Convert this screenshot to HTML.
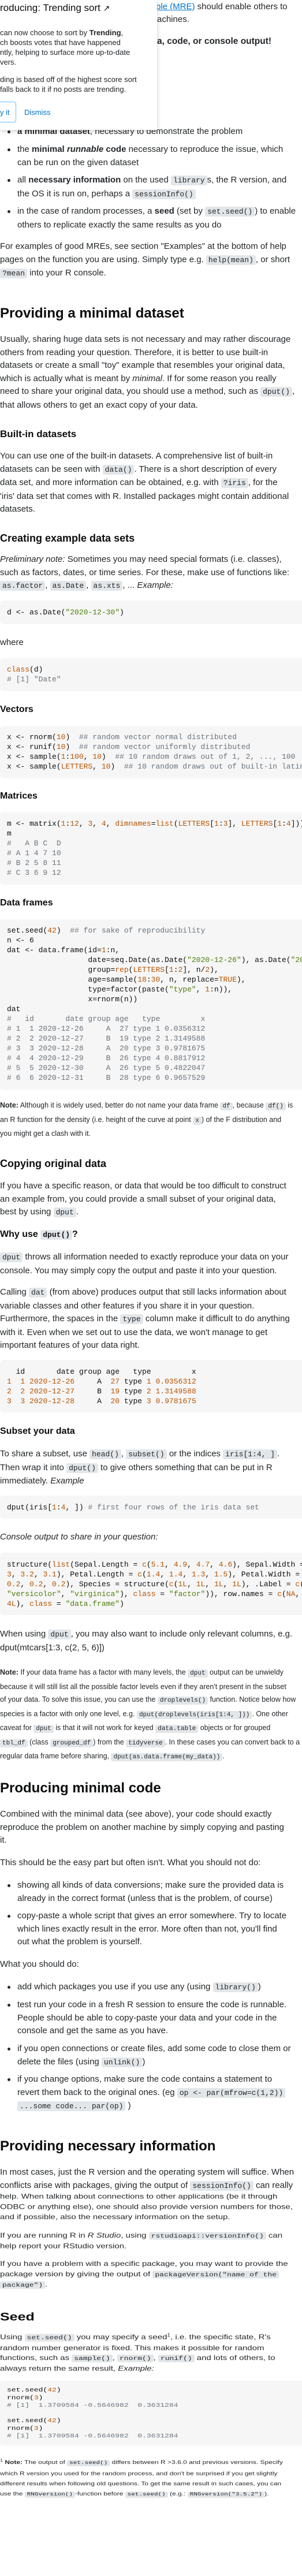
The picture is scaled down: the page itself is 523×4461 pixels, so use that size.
<!DOCTYPE html>
<html><head><meta charset="utf-8">
<style>
html,body{margin:0;padding:0;background:#fff}
html{overflow:hidden}
body{width:523px;height:4461px;position:relative;overflow:hidden;overflow-x:hidden;font-family:"Liberation Sans",sans-serif;color:#232629}
.p{position:absolute;left:0;white-space:nowrap;font-size:15px;line-height:22.5px}
.li{position:absolute;left:30px;white-space:nowrap;font-size:15px;line-height:22.5px}
.li:before{content:"";position:absolute;left:-17px;top:9px;width:5px;height:5px;border-radius:50%;background:#232629}
.n{font-size:12.5px}
.n code{font-size:11px}
code{font-family:"Liberation Mono",monospace;font-size:13px;background:#e3e6e8;border-radius:3px;padding:1px 4px}
.h1{position:absolute;left:0;font-size:24px;font-weight:bold;line-height:30px;white-space:nowrap;color:#0c0d0e}
.h2{position:absolute;left:0;font-size:18px;font-weight:bold;line-height:24px;white-space:nowrap;color:#0c0d0e}
.h3{position:absolute;left:0;font-size:16px;font-weight:bold;line-height:24px;white-space:nowrap;color:#0c0d0e}
.h3 code{font-size:13px}
.cb{position:absolute;left:0;width:523px;overflow:hidden;background:#f6f6f6;border-radius:6px 0 0 6px}
.cb pre{margin:0;padding-left:12px;font-family:"Liberation Mono",monospace;font-size:13px;line-height:17px;color:#0c0d0e}
.o{color:#b75301}.g{color:#4e7d0b}.c{color:#6a737c}
.pop{position:absolute;left:0;top:0;width:272px;height:225px;background:#fff;box-shadow:0 2px 8px rgba(0,0,0,.18),0 0 1px rgba(0,0,0,.15);overflow:hidden}
.pop div{position:absolute;white-space:nowrap}
.sq{position:absolute;left:0;top:3796px;width:523px;height:800px;overflow:hidden;transform:scaleY(0.78);transform-origin:0 0}
</style></head><body>

<div class="p" style="top:1px;left:270px"><a style="color:#0074cc;text-decoration:underline">ple (MRE)</a> should enable others to</div>
<div class="p" style="top:23px;left:272px">achines.</div>
<div class="p" style="top:61px;left:272px;font-weight:bold;font-size:15.5px">a, code, or console output!</div>

<div class="li" style="top:217px"><b>a minimal dataset</b>, necessary to demonstrate the problem</div>
<div class="li" style="top:248px">the <b>minimal <i>runnable</i> code</b> necessary to reproduce the issue, which<br>can be run on the given dataset</div>
<div class="li" style="top:301px">all <b>necessary information</b> on the used <code>library</code>s, the R version, and<br>the OS it is run on, perhaps a <code>sessionInfo()</code></div>
<div class="li" style="top:355px">in the case of random processes, a <b>seed</b> (set by <code>set.seed()</code>) to enable<br>others to replicate exactly the same results as you do</div>

<div class="pop">
<div style="left:0;top:3px;font-size:17px;line-height:22px;color:#0c0d0e">roducing: Trending sort <span style="font-size:14px">&#x2197;</span></div>
<div style="left:0;top:48px;font-size:13px;line-height:17px;color:#232629">can now choose to sort by <b>Trending</b>,<br>ch boosts votes that have happened<br>ntly, helping to surface more up-to-date<br>vers.</div>
<div style="left:0;top:129px;font-size:13px;line-height:17px;color:#232629">ding is based off of the highest score sort<br>falls back to it if no posts are trending.</div>
<div style="left:-10px;top:176px;width:36px;height:34px;border:1px solid #6cbbf7;border-radius:4px"></div>
<div style="left:0;top:186px;font-size:13px;line-height:17px;color:#0074cc">y it</div>
<div style="left:42px;top:186px;font-size:13px;line-height:17px;color:#0074cc">Dismiss</div>
</div>

<div class="p" style="top:416px">For examples of good MREs, see section "Examples" at the bottom of help<br>pages on the function you are using. Simply type e.g. <code>help(mean)</code>, or short<br><code>?mean</code> into your R console.</div>

<div class="h1" style="top:528px">Providing a minimal dataset</div>
<div class="p" style="top:577px">Usually, sharing huge data sets is not necessary and may rather discourage<br>others from reading your question. Therefore, it is better to use built-in<br>datasets or create a small "toy" example that resembles your original data,<br>which is actually what is meant by <i>minimal</i>. If for some reason you really<br>need to share your original data, you should use a method, such as <code>dput()</code>,<br>that allows others to get an exact copy of your data.</div>

<div class="h2" style="top:740px;font-size:17px">Built-in datasets</div>
<div class="p" style="top:779px">You can use one of the built-in datasets. A comprehensive list of built-in<br>datasets can be seen with <code>data()</code>. There is a short description of every<br>data set, and more information can be obtained, e.g. with <code>?iris</code>, for the<br>'iris' data set that comes with R. Installed packages might contain additional<br>datasets.</div>

<div class="h2" style="top:920px">Creating example data sets</div>
<div class="p" style="top:958px"><i>Preliminary note:</i> Sometimes you may need special formats (i.e. classes),<br>such as factors, dates, or time series. For these, make use of functions like:<br><code>as.factor</code>, <code>as.Date</code>, <code>as.xts</code>, ... <i>Example:</i></div>

<div class="cb" style="top:1040px;height:41px"><pre style="padding-top:12px">d &lt;- as.Date(<span class="g">"2020-12-30"</span>)</pre></div>
<div class="p" style="top:1102px">where</div>
<div class="cb" style="top:1140px;height:57px"><pre style="padding-top:11px"><span class="o">class</span>(d)
<span class="c"># [1] "Date"</span></pre></div>

<div class="h3" style="top:1217px">Vectors</div>
<div class="cb" style="top:1257px;height:91px"><pre style="padding-top:11px">x &lt;- rnorm(<span class="o">10</span>)  <span class="c">## random vector normal distributed</span>
x &lt;- runif(<span class="o">10</span>)  <span class="c">## random vector uniformly distributed</span>
x &lt;- sample(<span class="o">1</span>:<span class="o">100</span>, <span class="o">10</span>)  <span class="c">## 10 random draws out of 1, 2, ..., 100</span>
x &lt;- sample(<span class="o">LETTERS</span>, <span class="o">10</span>)  <span class="c">## 10 random draws out of built-in latin alphabet</span></pre></div>

<div class="h3" style="top:1367px">Matrices</div>
<div class="cb" style="top:1407px;height:125px"><pre style="padding-top:11px">m &lt;- matrix(<span class="o">1</span>:<span class="o">12</span>, <span class="o">3</span>, <span class="o">4</span>, <span class="o">dimnames</span>=<span class="o">list</span>(<span class="o">LETTERS</span>[<span class="o">1</span>:<span class="o">3</span>], <span class="o">LETTERS</span>[<span class="o">1</span>:<span class="o">4</span>]))
m
<span class="c">#   A B C  D</span>
<span class="c"># A 1 4 7 10</span>
<span class="c"># B 2 5 8 11</span>
<span class="c"># C 3 6 9 12</span></pre></div>

<div class="h3" style="top:1552px">Data frames</div>
<div class="cb" style="top:1592px;height:295px"><pre style="padding-top:11px">set.seed(<span class="o">42</span>)  <span class="c">## for sake of reproducibility</span>
n &lt;- 6
dat &lt;- data.frame(id=<span class="o">1</span>:n,
                  date=seq.Date(as.Date(<span class="g">"2020-12-26"</span>), as.Date(<span class="g">"2020-12-31"</span>), by=<span class="g">"day"</span>),
                  group=<span class="o">rep</span>(<span class="o">LETTERS</span>[<span class="o">1</span>:<span class="o">2</span>], n/<span class="o">2</span>),
                  age=sample(<span class="o">18</span>:<span class="o">30</span>, n, replace=<span class="o">TRUE</span>),
                  type=factor(paste(<span class="g">"type"</span>, <span class="o">1</span>:n)),
                  x=rnorm(n))
dat
<span class="c">#   id       date group age   type         x</span>
<span class="c"># 1  1 2020-12-26     A  27 type 1 0.0356312</span>
<span class="c"># 2  2 2020-12-27     B  19 type 2 1.3149588</span>
<span class="c"># 3  3 2020-12-28     A  20 type 3 0.9781675</span>
<span class="c"># 4  4 2020-12-29     B  26 type 4 0.8817912</span>
<span class="c"># 5  5 2020-12-30     A  26 type 5 0.4822047</span>
<span class="c"># 6  6 2020-12-31     B  28 type 6 0.9657529</span></pre></div>

<div class="p n" style="top:1903px"><b>Note:</b> Although it is widely used, better do not name your data frame <code>df</code>, because <code>df()</code> is<br>an R function for the density (i.e. height of the curve at point <code>x</code>) of the F distribution and<br>you might get a clash with it.</div>

<div class="h2" style="top:2003px">Copying original data</div>
<div class="p" style="top:2043px">If you have a specific reason, or data that would be too difficult to construct<br>an example from, you could provide a small subset of your original data,<br>best by using <code>dput</code>.</div>
<div class="h3" style="top:2126px">Why use <code>dput()</code>?</div>
<div class="p" style="top:2166px"><code>dput</code> throws all information needed to exactly reproduce your data on your<br>console. You may simply copy the output and paste it into your question.</div>
<div class="p" style="top:2227px">Calling <code>dat</code> (from above) produces output that still lacks information about<br>variable classes and other features if you share it in your question.<br>Furthermore, the spaces in the <code>type</code> column make it difficult to do anything<br>with it. Even when we set out to use the data, we won't manage to get<br>important features of your data right.</div>

<div class="cb" style="top:2355px;height:91px"><pre style="padding-top:12px">  id       date group age   type         x
<span class="o">1</span>  <span class="o">1</span> <span class="o">2020-12-26</span>     A  <span class="o">27</span> type <span class="o">1</span> <span class="o">0.0356312</span>
<span class="o">2</span>  <span class="o">2</span> <span class="o">2020-12-27</span>     B  <span class="o">19</span> type <span class="o">2</span> <span class="o">1.3149588</span>
<span class="o">3</span>  <span class="o">3</span> <span class="o">2020-12-28</span>     A  <span class="o">20</span> type <span class="o">3</span> <span class="o">0.9781675</span></pre></div>

<div class="h3" style="top:2467px">Subset your data</div>
<div class="p" style="top:2507px">To share a subset, use <code>head()</code>, <code>subset()</code> or the indices <code>iris[1:4, ]</code>.<br>Then wrap it into <code>dput()</code> to give others something that can be put in R<br>immediately. <i>Example</i></div>
<div class="cb" style="top:2590px;height:40px"><pre style="padding-top:12px">dput(iris[<span class="o">1</span>:<span class="o">4</span>, ]) <span class="c"># first four rows of the iris data set</span></pre></div>
<div class="p" style="top:2651px"><i>Console output to share in your question:</i></div>
<div class="cb" style="top:2689px;height:108px"><pre style="padding-top:12px">structure(<span class="o">list</span>(Sepal.Length = <span class="o">c</span>(<span class="o">5.1</span>, <span class="o">4.9</span>, <span class="o">4.7</span>, <span class="o">4.6</span>), Sepal.Width = <span class="o">c</span>(<span class="o">3.5</span>,
<span class="o">3</span>, <span class="o">3.2</span>, <span class="o">3.1</span>), Petal.Length = <span class="o">c</span>(<span class="o">1.4</span>, <span class="o">1.4</span>, <span class="o">1.3</span>, <span class="o">1.5</span>), Petal.Width = <span class="o">c</span>(<span class="o">0.2</span>,
<span class="o">0.2</span>, <span class="o">0.2</span>, <span class="o">0.2</span>), Species = structure(<span class="o">c</span>(<span class="o">1L</span>, <span class="o">1L</span>, <span class="o">1L</span>, <span class="o">1L</span>), .Label = <span class="o">c</span>(<span class="g">"setosa"</span>,
<span class="g">"versicolor"</span>, <span class="g">"virginica"</span>), <span class="o">class</span> = <span class="g">"factor"</span>)), row.names = <span class="o">c</span>(<span class="o">NA</span>,
<span class="o">4L</span>), <span class="o">class</span> = <span class="g">"data.frame"</span>)</pre></div>

<div class="p" style="top:2819px">When using <code>dput</code>, you may also want to include only relevant columns, e.g.<br>dput(mtcars[1:3, c(2, 5, 6)])</div>
<div class="p n" style="top:2885px"><b>Note:</b> If your data frame has a factor with many levels, the <code>dput</code> output can be unwieldy<br>because it will still list all the possible factor levels even if they aren't present in the subset<br>of your data. To solve this issue, you can use the <code>droplevels()</code> function. Notice below how<br>species is a factor with only one level, e.g. <code>dput(droplevels(iris[1:4, ]))</code>. One other<br>caveat for <code>dput</code> is that it will not work for keyed <code>data.table</code> objects or for grouped<br><code>tbl_df</code> (class <code>grouped_df</code>) from the <code>tidyverse</code>. In these cases you can convert back to a<br>regular data frame before sharing, <code>dput(as.data.frame(my_data))</code>.</div>

<div class="h1" style="top:3082px">Producing minimal code</div>
<div class="p" style="top:3131px">Combined with the minimal data (see above), your code should exactly<br>reproduce the problem on another machine by simply copying and pasting<br>it.</div>
<div class="p" style="top:3215px">This should be the easy part but often isn't. What you should not do:</div>
<div class="li" style="top:3254px">showing all kinds of data conversions; make sure the provided data is<br>already in the correct format (unless that is the problem, of course)</div>
<div class="li" style="top:3307px">copy-paste a whole script that gives an error somewhere. Try to locate<br>which lines exactly result in the error. More often than not, you'll find<br>out what the problem is yourself.</div>
<div class="p" style="top:3391px">What you should do:</div>
<div class="li" style="top:3430px">add which packages you use if you use any (using <code>library()</code>)</div>
<div class="li" style="top:3461px">test run your code in a fresh R session to ensure the code is runnable.<br>People should be able to copy-paste your data and your code in the<br>console and get the same as you have.</div>
<div class="li" style="top:3537px">if you open connections or create files, add some code to close them or<br>delete the files (using <code>unlink()</code>)</div>
<div class="li" style="top:3590px">if you change options, make sure the code contains a statement to<br>revert them back to the original ones. (eg <code>op &lt;- par(mfrow=c(1,2))</code><br><code>...some code... par(op)</code> )</div>

<div class="h1" style="top:3702px">Providing necessary information</div>
<div class="p" style="top:3751px">In most cases, just the R version and the operating system will suffice. When<br>conflicts arise with packages, giving the output of <code>sessionInfo()</code> can really</div>

<div class="sq">
<div class="p" style="top:0">help. When talking about connections to other applications (be it through<br>ODBC or anything else), one should also provide version numbers for those,<br>and if possible, also the necessary information on the setup.</div>
<div class="p" style="top:86px">If you are running R in <i>R Studio</i>, using <code>rstudioapi::versionInfo()</code> can<br>help report your RStudio version.</div>
<div class="p" style="top:149px">If you have a problem with a specific package, you may want to provide the<br>package version by giving the output of <code>packageVersion("name of the</code><br><code>package")</code>.</div>
<div class="h1" style="top:262px;font-size:25px">Seed</div>
<div class="p" style="top:312px">Using <code>set.seed()</code> you may specify a seed<sup style="font-size:10px;line-height:0">1</sup>, i.e. the specific state, R's<br>random number generator is fixed. This makes it possible for random<br>functions, such as <code>sample()</code>, <code>rnorm()</code>, <code>runif()</code> and lots of others, to<br>always return the same result, <i>Example:</i></div>
<div class="cb" style="top:419px;height:144px"><pre style="padding-top:12px">set.seed(<span class="o">42</span>)
rnorm(<span class="o">3</span>)
<span class="c"># [1]  1.3709584 -0.5646982  0.3631284</span>

set.seed(<span class="o">42</span>)
rnorm(<span class="o">3</span>)
<span class="c"># [1]  1.3709584 -0.5646982  0.3631284</span></pre></div>
<div class="p" style="top:589px;font-size:12px"><sup style="font-size:9px;line-height:0">1</sup> <b>Note:</b> The output of <code style="font-size:11px">set.seed()</code> differs between R &gt;3.6.0 and previous versions. Specify<br>which R version you used for the random process, and don't be surprised if you get slightly<br>different results when following old questions. To get the same result in such cases, you can<br>use the <code style="font-size:11px">RNGversion()</code>-function before <code style="font-size:11px">set.seed()</code> (e.g.: <code style="font-size:11px">RNGversion("3.5.2")</code>).</div>
</div>

</body></html>
